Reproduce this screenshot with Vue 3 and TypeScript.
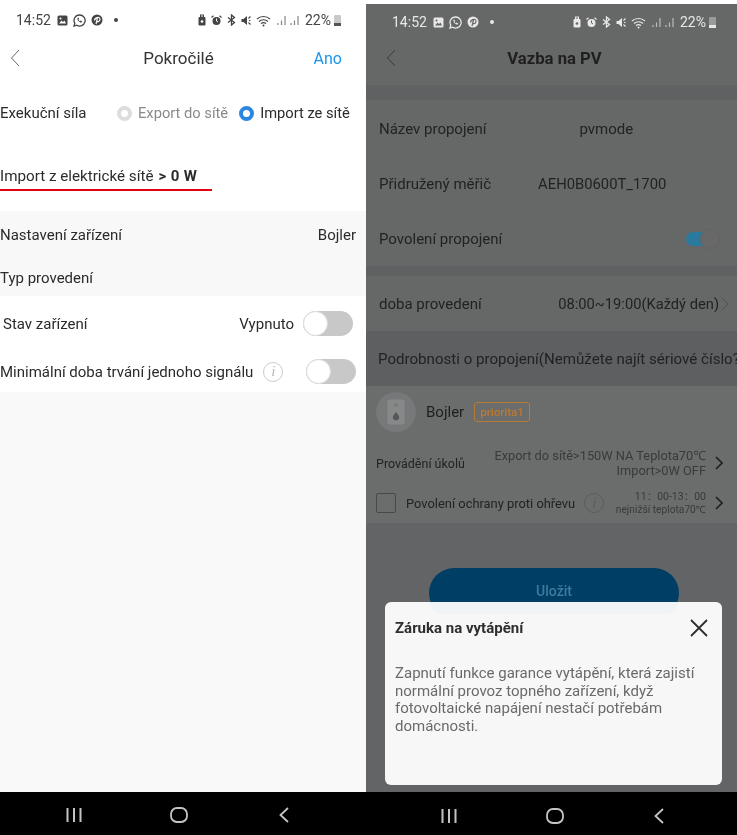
<template>
  <div class="shots">
    <!-- settings screen -->
    <section class="phone light">
      <div class="status">
        <span class="time">14:52</span>
        <svg class="ic" width="11" height="11" viewBox="0 0 11 11"><rect x="0.5" y="0.5" width="10" height="10" rx="1.5" fill="currentColor" /><path d="M2 8.5 4.5 5.5 6 7 7.5 5.5 9 8.5Z" fill="#fff" /><circle cx="3.5" cy="3.5" r="1" fill="#fff" /></svg>
        <svg class="ic" width="13" height="13" viewBox="0 0 13 13"><path d="M6.5 1a5.5 5.5 0 0 0-4.7 8.3L1 12l2.800-.8A5.5 5.5 0 1 0 6.5 1Z" fill="none" stroke="currentColor" stroke-width="1.3" /><path d="M4.5 4c-.6 2 2 4.800 4 4.5l.6-1.200-1.500-.7-.6.6c-.7-.3-1.200-.8-1.500-1.500l.6-.6-.7-1.500Z" fill="currentColor" /></svg>
        <svg class="ic" width="12" height="12" viewBox="0 0 12 12"><circle cx="6" cy="6" r="5.5" fill="currentColor" /><path d="M5 10 6.5 4M3.800 6.5C3 4 8.5 1.800 9 5c.2 2.5-2.5 3.400-3.5 2" fill="none" stroke="#fff" stroke-width="1.2" /></svg>
        <span class="dot"></span>
        <div class="status-right">
          <svg class="ic" width="8" height="12" viewBox="0 0 8 12"><path d="M1 3.5h6v7.500H1Z" fill="currentColor" stroke="currentColor" /><rect x="2.5" y="1" width="3" height="2" fill="none" stroke="currentColor" /><circle cx="4" cy="7.5" r="1.3" fill="#fff" /></svg>
          <svg class="ic alarm" width="11" height="11" viewBox="0 0 11 11"><circle cx="5.5" cy="6" r="4" fill="currentColor" /><path d="M5.5 3.5V6L7 7" stroke="#fff" fill="none" /><path d="M0.5 2.5 2.5 .7M10.5 2.500 8.5 .7" stroke="currentColor" stroke-width="1.2" /></svg>
          <svg class="ic bt" width="9" height="12" viewBox="0 0 9 12"><path d="M1 3.5 7.5 8.5 4.5 11V1L7.5 3.5 1 8.5" fill="none" stroke="currentColor" stroke-width="1.3" /></svg>
          <svg class="ic mute" width="10" height="11" viewBox="0 0 10 11"><path d="M0.5 4h2L6 1v9L2.5 7h-2Z" fill="currentColor" /><path d="M7.5 3.5 9.5 1.5M7.5 7.5 9.5 9.5M8 5.5h1.5" stroke="currentColor" stroke-width="1.1" /></svg>
          <svg class="ic wifi" width="16" height="13" viewBox="0 0 16 13"><path d="M1 5a9.5 9.5 0 0 1 13 0M3 7.5a6.5 6.5 0 0 1 9 0M5 9.700a3.5 3.5 0 0 1 5 0" fill="none" stroke="currentColor" stroke-width="1.1" /><circle cx="7.5" cy="11.500" r="1" fill="currentColor" /></svg>
          <svg class="ic sig" width="10" height="10" viewBox="0 0 10 10"><path d="M1 8v2M4.5 5.5V10M8 1v9" stroke="currentColor" stroke-width="1.2" opacity=".65" /></svg>
          <svg class="ic sig2" width="10" height="10" viewBox="0 0 10 10"><path d="M1 8v2M4.5 5.5V10M8 1v9" stroke="currentColor" stroke-width="1.2" opacity=".65" /></svg>
          <span class="pct">22%</span>
          <span class="batt"><i></i></span>
        </div>
      </div>

      <header class="topbar">
        <svg class="back" width="10" height="18" viewBox="0 0 10 18"><path d="M9 1 1.5 9 9 17" fill="none" stroke="currentColor" stroke-width="1" /></svg>
        <h1>Pokročilé</h1>
        <span class="confirm">Ano</span>
      </header>

      <div class="radio-row">
        <span class="radio-label">Exekuční síla</span>
        <span class="radio off"></span>
        <span class="radio-text muted">Export do sítě</span>
        <span class="radio on"></span>
        <span class="radio-text">Import ze sítě</span>
      </div>

      <div class="import-row">
        <span>Import z elektrické sítě</span>
        <b>&gt; 0 W</b>
      </div>
      <div class="red-line"></div>

      <div class="grey-block">
        <div class="row"><span>Nastavení zařízení</span><span>Bojler</span></div>
        <div class="row"><span>Typ provedení</span></div>
      </div>

      <div class="state-row">
        <span>Stav zařízení</span>
        <span class="state-value">Vypnuto</span>
        <span class="toggle"></span>
      </div>
      <div class="signal-row">
        <span>Minimální doba trvání jednoho signálu</span>
        <span class="info">i</span>
        <span class="toggle"></span>
      </div>

      <div class="fill"></div>

      <nav class="navbar">
        <svg width="16" height="16" viewBox="0 0 16 16"><path d="M1.5 1v14M8 1v14M14.5 1v14" stroke="currentColor" stroke-width="2" /></svg>
        <svg width="18" height="16" viewBox="0 0 18 16"><rect x="1" y="1" width="16" height="14" rx="6" fill="none" stroke="currentColor" stroke-width="1.8" /></svg>
        <svg width="10" height="16" viewBox="0 0 10 16"><path d="M9 1 1.5 8 9 15" fill="none" stroke="currentColor" stroke-width="1.8" /></svg>
      </nav>
    </section>

    <!-- PV binding screen with dialog open -->
    <section class="phone dark">
      <div class="status">
        <span class="time">14:52</span>
        <svg class="ic" width="11" height="11" viewBox="0 0 11 11"><rect x="0.5" y="0.5" width="10" height="10" rx="1.5" fill="currentColor" /><path d="M2 8.5 4.5 5.5 6 7 7.5 5.5 9 8.5Z" fill="#666" /><circle cx="3.5" cy="3.5" r="1" fill="#666" /></svg>
        <svg class="ic" width="13" height="13" viewBox="0 0 13 13"><path d="M6.5 1a5.5 5.5 0 0 0-4.7 8.3L1 12l2.800-.8A5.5 5.5 0 1 0 6.5 1Z" fill="none" stroke="currentColor" stroke-width="1.3" /><path d="M4.5 4c-.6 2 2 4.800 4 4.5l.6-1.200-1.500-.7-.6.6c-.7-.3-1.200-.8-1.500-1.500l.6-.6-.7-1.500Z" fill="currentColor" /></svg>
        <svg class="ic" width="12" height="12" viewBox="0 0 12 12"><circle cx="6" cy="6" r="5.5" fill="currentColor" /><path d="M5 10 6.5 4M3.800 6.5C3 4 8.5 1.800 9 5c.2 2.5-2.5 3.400-3.5 2" fill="none" stroke="#666" stroke-width="1.2" /></svg>
        <span class="dot"></span>
        <div class="status-right">
          <svg class="ic" width="8" height="12" viewBox="0 0 8 12"><path d="M1 3.5h6v7.500H1Z" fill="currentColor" stroke="currentColor" /><rect x="2.5" y="1" width="3" height="2" fill="none" stroke="currentColor" /><circle cx="4" cy="7.5" r="1.3" fill="#666" /></svg>
          <svg class="ic alarm" width="11" height="11" viewBox="0 0 11 11"><circle cx="5.5" cy="6" r="4" fill="currentColor" /><path d="M5.5 3.5V6L7 7" stroke="#666" fill="none" /><path d="M0.5 2.5 2.5 .7M10.5 2.500 8.5 .7" stroke="currentColor" stroke-width="1.2" /></svg>
          <svg class="ic bt" width="9" height="12" viewBox="0 0 9 12"><path d="M1 3.5 7.5 8.5 4.5 11V1L7.5 3.5 1 8.5" fill="none" stroke="currentColor" stroke-width="1.3" /></svg>
          <svg class="ic mute" width="10" height="11" viewBox="0 0 10 11"><path d="M0.5 4h2L6 1v9L2.5 7h-2Z" fill="currentColor" /><path d="M7.5 3.5 9.5 1.5M7.5 7.5 9.5 9.5M8 5.5h1.5" stroke="currentColor" stroke-width="1.1" /></svg>
          <svg class="ic wifi" width="16" height="13" viewBox="0 0 16 13"><path d="M1 5a9.5 9.5 0 0 1 13 0M3 7.5a6.5 6.5 0 0 1 9 0M5 9.700a3.5 3.5 0 0 1 5 0" fill="none" stroke="currentColor" stroke-width="1.1" /><circle cx="7.5" cy="11.500" r="1" fill="currentColor" /></svg>
          <svg class="ic sig" width="10" height="10" viewBox="0 0 10 10"><path d="M1 8v2M4.5 5.5V10M8 1v9" stroke="currentColor" stroke-width="1.2" opacity=".65" /></svg>
          <svg class="ic sig2" width="10" height="10" viewBox="0 0 10 10"><path d="M1 8v2M4.5 5.5V10M8 1v9" stroke="currentColor" stroke-width="1.2" opacity=".65" /></svg>
          <span class="pct">22%</span>
          <span class="batt"><i></i></span>
        </div>
      </div>

      <header class="topbar">
        <svg class="back" width="10" height="18" viewBox="0 0 10 18"><path d="M9 1 1.5 9 9 17" fill="none" stroke="currentColor" stroke-width="1" /></svg>
        <h1>Vazba na PV</h1>
      </header>
      <div class="band band-top"></div>

      <div class="pv-list">
        <div class="pv-row">
          <span>Název propojení</span><span class="pv-name">pvmode</span>
        </div>
        <div class="pv-row">
          <span>Přidružený měřič</span><span class="pv-meter">AEH0B0600T_1700</span>
        </div>
        <div class="pv-row">
          <span>Povolení propojení</span>
          <span class="pv-toggle"><i></i></span>
        </div>
      </div>
      <div class="band band-thin"></div>

      <div class="pv-row time-row">
        <span>doba provedení</span>
        <span class="pv-time">08:00~19:00(Každý den)</span>
        <svg width="8" height="14" viewBox="0 0 8 14"><path d="M1 1 7 7 1 13" fill="none" stroke="#4d4d4d" stroke-width="1" /></svg>
      </div>

      <div class="detail-head">Podrobnosti o propojení(Nemůžete najít sériové číslo?</div>

      <div class="device">
        <div class="device-top">
          <span class="avatar">
            <svg width="18" height="26" viewBox="0 0 18 26"><rect x="0.5" y="0.5" width="17" height="25" rx="2" fill="#878989" /><circle cx="9" cy="6" r="1.5" fill="none" stroke="#6e7071" stroke-width=".8" /><path d="M9 13c-3 3.500-3.500 5-3 6.500a3.200 3.200 0 0 0 6 0c.5-1.500 0-3-3-6.500Z" fill="#55585a" /></svg>
          </span>
          <span class="device-name">Bojler</span>
          <span class="tag">priorita1</span>
        </div>
        <div class="task-row">
          <span class="task-label">Provádění úkolů</span>
          <div class="task-value">
            <div>Export do sítě&gt;150W NA Teplota70℃</div>
            <div>Import&gt;0W OFF</div>
          </div>
          <svg class="chev" width="8" height="14" viewBox="0 0 8 14"><path d="M1 1 7 7 1 13" fill="none" stroke="#1f1f1f" stroke-width="1.6" /></svg>
        </div>
        <div class="guard-row">
          <span class="check"></span>
          <span class="guard-label">Povolení ochrany proti ohřevu</span>
          <span class="info dim">i</span>
          <div class="guard-value">
            <div class="guard-time">11：00-13：00</div>
            <div>nejnižší teplota70℃</div>
          </div>
          <svg class="chev" width="8" height="14" viewBox="0 0 8 14"><path d="M1 1 7 7 1 13" fill="none" stroke="#1f1f1f" stroke-width="1.6" /></svg>
        </div>
      </div>

      <div class="save-wrap">
        <div class="save">Uložit</div>
      </div>

      <nav class="navbar">
        <svg width="16" height="16" viewBox="0 0 16 16"><path d="M1.5 1v14M8 1v14M14.5 1v14" stroke="currentColor" stroke-width="2" /></svg>
        <svg width="18" height="16" viewBox="0 0 18 16"><rect x="1" y="1" width="16" height="14" rx="6" fill="none" stroke="currentColor" stroke-width="1.8" /></svg>
        <svg width="10" height="16" viewBox="0 0 10 16"><path d="M9 1 1.5 8 9 15" fill="none" stroke="currentColor" stroke-width="1.8" /></svg>
      </nav>

      <div class="dialog">
        <div class="dialog-head">
          <strong>Záruka na vytápění</strong>
          <svg width="20" height="20" viewBox="0 0 20 20"><path d="M2 2 18 18M18 2 2 18" stroke="#2e2e2e" stroke-width="1.8" /></svg>
        </div>
        <p>Zapnutí funkce garance vytápění, která zajistí normální provoz topného zařízení, když fotovoltaické napájení nestačí potřebám domácnosti.</p>
      </div>
    </section>
  </div>
</template>

<script setup lang="ts">
</script>

<style>
html,
body {
  margin: 0;
  background: #fff;
}
</style>

<style scoped>
.shots {
  display: flex;
  width: 737px;
  height: 835px;
  overflow: hidden;
  font-family: Roboto, "Noto Sans", "Noto Sans CJK SC", sans-serif;
  font-size: 15px;
  color: #2b2b2b;
  filter: blur(0.35px);
}

.phone {
  position: relative;
  display: flex;
  flex-direction: column;
  height: 835px;
  overflow: hidden;
}

.light {
  width: 366px;
  background: #fff;
}

.dark {
  width: 371px;
  padding-top: 4px;
  box-sizing: border-box;
  background: linear-gradient(#fff 4px, #666767 4px);
  color: #1f1f1f;
}

/* status bar */
.status {
  flex: none;
  display: flex;
  align-items: center;
  height: 40px;
  padding: 0 25px 0 16px;
  color: #444;
}

.dark .status {
  height: 36px;
  padding: 0 21px 0 26px;
  color: #e8e8e8;
}

.time {
  font-size: 14px;
  margin-right: 6px;
}

.ic {
  flex: none;
  margin-right: 5px;
}

.dot {
  width: 4px;
  height: 4px;
  margin-left: 6px;
  border-radius: 50%;
  background: currentColor;
}

.status-right {
  display: flex;
  align-items: center;
  margin-left: auto;
}

.status-right .sig {
  margin-right: 3px;
}

.pct {
  font-size: 14px;
}

.batt {
  position: relative;
  width: 7px;
  height: 11px;
  margin-left: 3px;
  border-radius: 1px;
  background: #c9c9c9;
}

.batt i {
  position: absolute;
  left: 0;
  right: 0;
  bottom: 0;
  height: 3px;
  background: #555;
}

.dark .batt {
  background: #9a9a9a;
}

.dark .batt i {
  background: #e8e8e8;
}

/* top bars */
.topbar {
  flex: none;
  position: relative;
  display: flex;
  align-items: center;
  justify-content: center;
  box-sizing: border-box;
  height: 36px;
  padding-right: 9px;
}

.topbar h1 {
  margin: 0;
  font-size: 17px;
  font-weight: 400;
  color: #333;
}

.dark .topbar {
  height: 45px;
  padding: 0 0 9px 6px;
}

.dark .topbar h1 {
  font-size: 16.7px;
  font-weight: 700;
  color: #1f1f1f;
}

.back {
  position: absolute;
  left: 10px;
  color: #666;
}

.dark .back {
  left: 20px;
  color: #3a3a3a;
}

.confirm {
  position: absolute;
  right: 24px;
  font-size: 16px;
  color: #1e96e8;
}

/* left screen rows */
.radio-row {
  flex: none;
  display: flex;
  align-items: center;
  height: 74px;
}

.radio-label {
  width: 117px;
}

.radio {
  flex: none;
  box-sizing: border-box;
  width: 15px;
  height: 15px;
  border-radius: 50%;
  margin-right: 6px;
}

.radio.off {
  border: 4px solid #ddd;
}

.radio.on {
  border: 4px solid #2a86e0;
}

.radio-text {
  margin-right: 11px;
  font-size: 14.7px;
  white-space: nowrap;
}

.muted {
  color: #8a8a8a;
}

.import-row {
  flex: none;
  display: flex;
  align-items: center;
  gap: 5px;
  height: 39px;
  padding-top: 12px;
  box-sizing: border-box;
  font-size: 15.2px;
}

.import-row b {
  font-size: 15px;
  font-weight: 700;
  letter-spacing: 0.4px;
}

.red-line {
  flex: none;
  width: 212px;
  height: 2px;
  background: #e60012;
}

.grey-block {
  flex: none;
  height: 85px;
  margin-top: 20px;
  padding-top: 2px;
  box-sizing: border-box;
  background: #f8f8f8;
}

.row {
  display: flex;
  align-items: center;
  justify-content: space-between;
  height: 43px;
  padding-right: 10px;
}

.state-row {
  flex: none;
  display: flex;
  align-items: center;
  height: 55px;
  padding: 0 13px 0 3px;
}

.state-value {
  margin-left: auto;
  margin-right: 9px;
}

.toggle {
  flex: none;
  position: relative;
  width: 50px;
  height: 25px;
  border-radius: 13px;
  background: #c8c8c8;
}

.toggle::before {
  content: "";
  position: absolute;
  left: 0;
  top: 0;
  box-sizing: border-box;
  width: 25px;
  height: 25px;
  border-radius: 50%;
  border: 1px solid #ddd;
  background: #fff;
}

.signal-row {
  flex: none;
  display: flex;
  align-items: center;
  height: 41px;
  padding-right: 10px;
}

.info {
  flex: none;
  display: flex;
  align-items: center;
  justify-content: center;
  box-sizing: border-box;
  width: 20px;
  height: 20px;
  margin-left: 10px;
  margin-right: auto;
  border: 1px solid #ccc;
  border-radius: 50%;
  font-family: "Liberation Serif", serif;
  font-style: italic;
  font-size: 15px;
  color: #bbb;
}

.fill {
  flex: 1;
  background: #f9f9f9;
}

.navbar {
  flex: none;
  display: flex;
  align-items: center;
  gap: 88px;
  box-sizing: border-box;
  height: 43px;
  padding: 3px 0 0 66px;
  background: #000;
  color: #c4c4c4;
}

.navbar svg:last-child {
  margin-left: 3px;
}

.dark .navbar {
  gap: 89px;
  padding: 4px 0 0 75px;
}

.dark .navbar svg:last-child {
  margin-left: 1px;
}

/* right screen */
.band {
  flex: none;
  background: #5f6163;
}

.band-top {
  height: 15px;
}

.band-thin {
  height: 10px;
}

.pv-list {
  flex: none;
  padding-top: 1px;
}

.pv-row {
  flex: none;
  display: flex;
  align-items: center;
  height: 55px;
  padding-left: 13px;
  color: #222;
}

.pv-name {
  margin-left: 93px;
}

.pv-meter {
  margin-left: 47px;
  font-size: 14.8px;
}

.pv-toggle {
  position: relative;
  width: 34px;
  height: 20px;
  margin-left: auto;
  margin-right: 17px;
}

.pv-toggle::before {
  content: "";
  position: absolute;
  left: 0;
  top: 3px;
  width: 24px;
  height: 14px;
  border-radius: 7px;
  background: #2a7a9e;
}

.pv-toggle i {
  position: absolute;
  right: 0;
  top: 0;
  box-sizing: border-box;
  width: 20px;
  height: 20px;
  border-radius: 50%;
  border: 1px solid #626364;
  background: #686869;
}

.time-row svg {
  margin-left: 2px;
  margin-right: 8px;
}

.pv-time {
  margin-left: auto;
  font-size: 14.7px;
}

.detail-head {
  flex: none;
  display: flex;
  align-items: center;
  height: 55px;
  padding-left: 12px;
  font-size: 15.1px;
  white-space: nowrap;
  background: #5e5f61;
  color: #222;
}

.device {
  flex: none;
  background: #6b6c6c;
  height: 137px;
  padding-left: 10px;
  box-sizing: border-box;
}

.device-top {
  display: flex;
  align-items: center;
  height: 52px;
}

.avatar {
  display: flex;
  align-items: center;
  justify-content: center;
  width: 40px;
  height: 40px;
  border-radius: 50%;
  background: #767879;
}

.device-name {
  margin-left: 10px;
  font-size: 15px;
  color: #1f1f1f;
}

.tag {
  display: flex;
  align-items: center;
  height: 20px;
  box-sizing: border-box;
  margin-left: 10px;
  padding: 0 5px;
  border: 1px solid #b87a36;
  border-radius: 3px;
  font-size: 11.5px;
  font-weight: 500;
  color: #bd7a30;
}

.task-row {
  display: flex;
  align-items: center;
  height: 50px;
  padding-right: 14px;
}

.task-label {
  font-size: 12.5px;
  color: #222;
}

.task-value {
  margin-left: auto;
  text-align: right;
  font-size: 12.8px;
  line-height: 15px;
  color: #3a3a3a;
}

.chev {
  flex: none;
  margin-left: 9px;
}

.guard-row {
  display: flex;
  align-items: center;
  height: 30px;
  padding-right: 14px;
}

.check {
  flex: none;
  box-sizing: border-box;
  width: 20px;
  height: 20px;
  border: 1px solid #484848;
  border-radius: 2px;
}

.guard-label {
  margin-left: 10px;
  font-size: 12.9px;
  white-space: nowrap;
  color: #222;
}

.info.dim {
  margin-left: 9px;
  border-color: #5c5c5c;
  color: #5c5c5c;
}

.guard-value {
  margin-left: auto;
  text-align: right;
  font-size: 10.2px;
  line-height: 13px;
  white-space: nowrap;
  color: #3a3a3a;
}

.guard-time {
  font-size: 10.5px;
}

.save-wrap {
  flex: 1;
  display: flex;
  justify-content: center;
  padding: 45px 0 0 5px;
  background: #636465;
}

.save {
  width: 250px;
  height: 50px;
  border-radius: 25px;
  background: #003e66;
  color: #3f7ba0;
  font-size: 14px;
  font-weight: 500;
  text-align: center;
  line-height: 47px;
}

/* dialog sheet sits over the dimmed page */
.dialog {
  position: absolute;
  left: 19px;
  top: 602px;
  box-sizing: border-box;
  width: 337px;
  height: 183px;
  padding: 14px 10px 0;
  border-radius: 6px;
  background: #f7f7f7;
  overflow: hidden;
}

.dialog::before {
  content: "";
  position: absolute;
  left: 44px;
  top: -16px;
  width: 250px;
  height: 28px;
  border-radius: 14px;
  background: #f0f4f7;
}

.dialog-head {
  position: relative;
  display: flex;
  align-items: center;
  justify-content: space-between;
  height: 24px;
  padding-right: 3px;
}

.dialog-head strong {
  font-size: 15px;
  font-weight: 700;
  color: #2e2e2e;
}

.dialog p {
  position: relative;
  margin: 25px 0 0;
  font-size: 15px;
  line-height: 17.5px;
  color: #6a6a6a;
}
</style>
